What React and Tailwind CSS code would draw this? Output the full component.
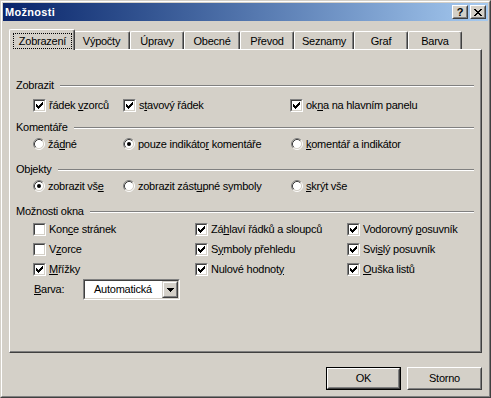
import React from "react";

function Check({ checked }) {
  return (
    <span className="relative block w-[13px] h-[13px] shrink-0 border border-t-[#808080] border-l-[#808080] border-b-white border-r-white">
      <span className="relative block w-full h-full border border-t-[#404040] border-l-[#404040] border-b-[#d4d0c8] border-r-[#d4d0c8] bg-white">
        {checked && (
          <svg className="absolute left-[1px] top-[1px]" width="7" height="7" viewBox="0 0 7 7" shapeRendering="crispEdges">
            <rect x="6" y="0" width="1" height="1" fill="#000" />
            <rect x="5" y="1" width="2" height="1" fill="#000" />
            <rect x="0" y="2" width="1" height="1" fill="#000" />
            <rect x="4" y="2" width="3" height="1" fill="#000" />
            <rect x="0" y="3" width="2" height="1" fill="#000" />
            <rect x="3" y="3" width="3" height="1" fill="#000" />
            <rect x="0" y="4" width="5" height="1" fill="#000" />
            <rect x="1" y="5" width="3" height="1" fill="#000" />
            <rect x="2" y="6" width="1" height="1" fill="#000" />
          </svg>
        )}
      </span>
    </span>
  );
}

function Radio({ checked }) {
  return (
    <svg width="12" height="12" viewBox="0 0 12 12" className="shrink-0 block">
      <circle cx="6" cy="6" r="4.5" fill="#ffffff" />
      <path d="M2.11 9.89 A5.5 5.5 0 0 1 9.89 2.11" stroke="#808080" fill="none" />
      <path d="M9.89 2.11 A5.5 5.5 0 0 1 2.11 9.89" stroke="#ffffff" fill="none" />
      <path d="M2.82 9.18 A4.5 4.5 0 0 1 9.18 2.82" stroke="#404040" fill="none" />
      <path d="M9.18 2.82 A4.5 4.5 0 0 1 2.82 9.18" stroke="#d4d0c8" fill="none" />
      {checked && <circle cx="6" cy="6" r="2" fill="#000" />}
    </svg>
  );
}

function Item({ control, children, className }) {
  return (
    <div className={"flex items-center shrink-0 " + (className || "")}>
      {control}
      <span className="ml-[3px] whitespace-nowrap">{children}</span>
    </div>
  );
}

function Header({ children, className }) {
  return (
    <div className={"flex items-center h-[16px] pl-[6px] pr-[7px] " + (className || "")}>
      <span className="whitespace-nowrap">{children}</span>
      <div className="flex-1 ml-[6px] mt-[1px] h-[2px] border-t border-t-[#808080] border-b border-b-white" />
    </div>
  );
}

const U = ({ children }) => <span className="underline underline-offset-[1px]">{children}</span>;

function Button({ children, isDefault }) {
  const inner = (
    <div className="w-full h-full border border-t-white border-l-white border-r-[#404040] border-b-[#404040]">
      <div className="w-full h-full border border-t-[#d4d0c8] border-l-[#d4d0c8] border-r-[#808080] border-b-[#808080] flex items-center justify-center">
        {children}
      </div>
    </div>
  );
  if (isDefault) {
    return <div className="w-[75px] h-[23px] border border-black">{inner}</div>;
  }
  return <div className="w-[75px] h-[23px]">{inner}</div>;
}

const tabs = [
  { label: "Výpočty", cls: "w-[57px]" },
  { label: "Úpravy", cls: "w-[54px]" },
  { label: "Obecné", cls: "w-[56px]" },
  { label: "Převod", cls: "w-[54px]" },
  { label: "Seznamy", cls: "w-[60px]" },
  { label: "Graf", cls: "w-[54px]" },
  { label: "Barva", cls: "w-[54px]" },
];

export default function App() {
  return (
    <div className="w-[491px] h-[398px] bg-[#d4d0c8] border border-t-[#d4d0c8] border-l-[#d4d0c8] border-r-[#404040] border-b-[#404040] font-['Liberation_Sans',Arial,sans-serif] text-[11px] leading-none tracking-[-0.25px] text-black">
      <div className="h-full border border-t-white border-l-white border-r-[#808080] border-b-[#808080] p-[1px] flex flex-col">
        {/* Title bar */}
        <div className="h-[18px] shrink-0 flex items-center bg-gradient-to-r from-[#0a246a] to-[#a6caf0] pl-[2px] pr-[2px]">
          <span className="text-white font-bold tracking-[0.3px] text-[11px]">Možnosti</span>
          <div className="ml-auto flex gap-[2px]">
            <div className="w-[16px] h-[14px] bg-[#d4d0c8] border border-t-white border-l-white border-r-[#404040] border-b-[#404040]">
              <div className="w-full h-full border border-t-[#d4d0c8] border-l-[#d4d0c8] border-r-[#808080] border-b-[#808080] flex items-center justify-center font-bold text-[11px] tracking-normal pt-[1px]">
                ?
              </div>
            </div>
            <div className="w-[16px] h-[14px] bg-[#d4d0c8] border border-t-white border-l-white border-r-[#404040] border-b-[#404040]">
              <div className="w-full h-full border border-t-[#d4d0c8] border-l-[#d4d0c8] border-r-[#808080] border-b-[#808080] flex items-center justify-center">
                <svg width="8" height="7" viewBox="0 0 8 7" shapeRendering="crispEdges">
                  <rect x="0" y="0" width="2" height="1" fill="#000" />
                  <rect x="6" y="0" width="2" height="1" fill="#000" />
                  <rect x="1" y="1" width="2" height="1" fill="#000" />
                  <rect x="5" y="1" width="2" height="1" fill="#000" />
                  <rect x="2" y="2" width="4" height="1" fill="#000" />
                  <rect x="3" y="3" width="2" height="1" fill="#000" />
                  <rect x="2" y="4" width="4" height="1" fill="#000" />
                  <rect x="1" y="5" width="2" height="1" fill="#000" />
                  <rect x="5" y="5" width="2" height="1" fill="#000" />
                  <rect x="0" y="6" width="2" height="1" fill="#000" />
                  <rect x="6" y="6" width="2" height="1" fill="#000" />
                </svg>
              </div>
            </div>
          </div>
        </div>

        {/* Tabs */}
        <div className="mt-[8px] ml-[8px] h-[20px] shrink-0 flex items-end">
          <div className="relative z-10 -ml-[2px] -mr-[2px] -mb-[1px] w-[66px] h-[21px] bg-[#d4d0c8] border-l border-t border-r border-l-white border-t-white border-r-[#404040] rounded-t-[2px] shadow-[inset_-1px_0_#808080]">
            <div className="absolute left-[3px] top-[3px] w-[59px] h-[16px] border border-dotted border-black flex items-center justify-center">
              Zobrazení
            </div>
          </div>
          {tabs.map((t) => (
            <div
              key={t.label}
              className={
                t.cls +
                " h-[18px] border-l border-t border-r border-l-white border-t-white border-r-[#404040] rounded-t-[2px] shadow-[inset_-1px_0_#808080] flex items-center justify-center pt-[2px]"
              }
            >
              {t.label}
            </div>
          ))}
        </div>

        {/* Panel */}
        <div className="ml-[6px] w-[473px] h-[304px] shrink-0 border-t border-l border-t-white border-l-white border-r border-b border-r-[#404040] border-b-[#404040] shadow-[inset_-1px_-1px_#808080] flex flex-col">
          <Header className="mt-[27px]">Zobrazit</Header>
          <div className="flex items-center h-[18px] mt-[3px] pl-[23px]">
            <Item className="w-[90px]" control={<Check checked />}>
              řádek <U>v</U>zorců
            </Item>
            <Item className="w-[167px]" control={<Check checked />}>
              s<U>t</U>avový řádek
            </Item>
            <Item control={<Check checked />}>
              ok<U>n</U>a na hlavním panelu
            </Item>
          </div>

          <Header className="mt-[5px]">Komentáře</Header>
          <div className="flex items-center h-[18px] pl-[23px]">
            <Item className="w-[90px]" control={<Radio />}>
              žá<U>d</U>né
            </Item>
            <Item className="w-[168px]" control={<Radio checked />}>
              pouze indikáto<U>r</U> komentáře
            </Item>
            <Item control={<Radio />}>
              <U>k</U>omentář a indikátor
            </Item>
          </div>

          <Header className="mt-[8px]">Objekty</Header>
          <div className="flex items-center h-[18px] pl-[23px]">
            <Item className="w-[90px]" control={<Radio checked />}>
              zobrazit vš<U>e</U>
            </Item>
            <Item className="w-[168px]" control={<Radio />}>
              zobrazit zást<U>u</U>pné symboly
            </Item>
            <Item control={<Radio />}>
              <U>s</U>krýt vše
            </Item>
          </div>

          <Header className="mt-[8px]">Možnosti okna</Header>
          <div className="grid grid-cols-[162px_152px_1fr] auto-rows-[20px] items-center pl-[23px]">
            <Item control={<Check />}>
              Kon<U>c</U>e stránek
            </Item>
            <Item control={<Check checked />}>
              Zá<U>h</U>laví řádků a sloupců
            </Item>
            <Item control={<Check checked />}>
              Vodorovný <U>p</U>osuvník
            </Item>
            <Item control={<Check />}>
              V<U>z</U>orce
            </Item>
            <Item control={<Check checked />}>
              S<U>y</U>mboly přehledu
            </Item>
            <Item control={<Check checked />}>
              Svi<U>s</U>lý posuvník
            </Item>
            <Item control={<Check checked />}>
              <U>M</U>řížky
            </Item>
            <Item control={<Check checked />}>
              Nulové hodnot<U>y</U>
            </Item>
            <Item control={<Check checked />}>
              <U>O</U>uška listů
            </Item>
          </div>

          <div className="flex items-center h-[21px] pl-[24px]">
            <span className="w-[49px] shrink-0">
              <U>B</U>arva:
            </span>
            <div className="w-[97px] h-[21px] border border-t-[#808080] border-l-[#808080] border-r-white border-b-white">
              <div className="w-full h-full border border-t-[#404040] border-l-[#404040] border-r-[#d4d0c8] border-b-[#d4d0c8] bg-white flex items-center">
                <span className="pl-[9px] flex-1">Automatická</span>
                <div className="w-[16px] h-full bg-[#d4d0c8] border border-t-[#d4d0c8] border-l-[#d4d0c8] border-r-[#404040] border-b-[#404040]">
                  <div className="w-full h-full border border-t-white border-l-white border-r-[#808080] border-b-[#808080] flex items-center justify-center">
                    <svg width="7" height="4" viewBox="0 0 7 4" shapeRendering="crispEdges">
                      <rect x="0" y="0" width="7" height="1" fill="#000" />
                      <rect x="1" y="1" width="5" height="1" fill="#000" />
                      <rect x="2" y="2" width="3" height="1" fill="#000" />
                      <rect x="3" y="3" width="1" height="1" fill="#000" />
                    </svg>
                  </div>
                </div>
              </div>
            </div>
          </div>
        </div>

        {/* Buttons */}
        <div className="mt-[14px] flex justify-end gap-[6px] pr-[6px]">
          <Button isDefault>OK</Button>
          <Button>Storno</Button>
        </div>
      </div>
    </div>
  );
}
